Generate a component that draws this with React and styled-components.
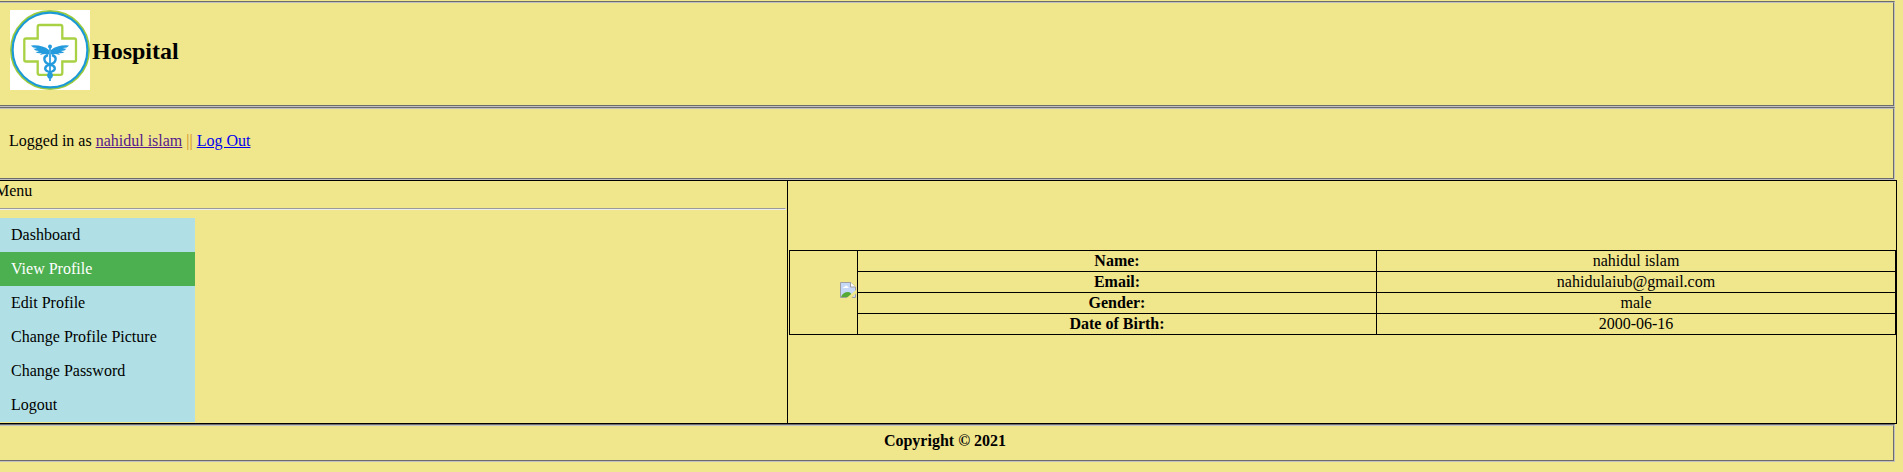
import React from "react";
import styled, { createGlobalStyle } from "styled-components";

const GlobalStyle = createGlobalStyle`
  html, body { margin: 0; padding: 0; background: #f0e68c; }
  body {
    height: 472px;
    overflow: hidden;
    color: #000;
    font: 16px/18px "Liberation Serif", "Times New Roman", serif;
  }
  *, *::before, *::after { box-sizing: border-box; }
`;

const Page = styled.div`
  width: 1900px;
  margin-left: -5px;
  padding-top: 1px;
`;

const Panel = styled.section`
  height: ${(p) => p.$height}px;
  border: 2px groove #c0c0c0;
`;

const Header = styled(Panel)`
  display: flex;
  align-items: flex-start;
  padding: 7px 13px;
`;

const Title = styled.h2`
  margin: 27px 0 0 2px;
  font-size: 24px;
  line-height: 28px;
  font-weight: bold;
`;

const Session = styled(Panel)`
  padding: 23px 12px;
`;

const Link = styled.a`
  color: ${(p) => (p.$visited ? "#551a8b" : "#0000ee")};
  text-decoration: underline;
`;

const Divider = styled.span`
  color: #d08a20;
`;

const Main = styled.main`
  display: grid;
  grid-template-columns: 794px 1fr;
  width: 1904px;
  height: 244px;
  margin-left: -2px;
  border: 1px solid #000;
`;

const Sidebar = styled.aside`
  padding: 1px;
  border-right: 1px solid #000;
`;

const Rule = styled.hr`
  margin: 8px 0;
  border: 1px solid;
  border-color: #9a9a9a #eee #eee #9a9a9a;
`;

const Menu = styled.ul`
  width: 200px;
  margin: 0;
  padding: 0;
  list-style: none;
  background: #b0e0e6;
`;

const MenuItem = styled.li`
  height: 34px;
  padding: 8px 16px;
  color: ${(p) => (p.$active ? "#fff" : "#000")};
  background: ${(p) => (p.$active ? "#4caf50" : "transparent")};
`;

const Content = styled.div`
  display: flex;
  align-items: center;
  padding: 0 0 19px 1px;
`;

const Profile = styled.div`
  display: grid;
  grid-template-columns: 68px 1fr;
  width: 100%;
  height: 85px;
  border: 1px solid #000;
`;

const Picture = styled.div`
  display: flex;
  align-items: center;
  justify-content: flex-end;
  padding: 0 1px 5px 0;
  border-right: 1px solid #000;
`;

const Rows = styled.div`
  display: grid;
  grid-template-rows: repeat(3, 21px) 20px;
`;

const Row = styled.div`
  display: grid;
  grid-template-columns: 519px 518px;
  border-bottom: 1px solid #000;
  text-align: center;
  line-height: 20px;
  &:last-child { border-bottom: 0; }
`;

const Label = styled.div`
  border-right: 1px solid #000;
  font-weight: bold;
`;

const Value = styled.div``;

const Footer = styled(Panel)`
  padding-top: 6px;
  text-align: center;
  font-weight: bold;
`;

const Logo = () => (
  <svg width="80" height="80" viewBox="0 0 80 80">
    <rect width="80" height="80" fill="#fff" />
    <circle cx="40" cy="40" r="39" fill="none" stroke="#9ccb3b" strokeWidth="2" />
    <circle cx="40" cy="40" r="37.400" fill="none" stroke="#1c9ad6" strokeWidth="2.200" />
    <path
      d="M29.500 15H50.500Q52.300 15 52.300 16.800V28.500H64.500Q66 28.500 66 30V50Q66 51.500 64.500 51.500H52.300V63Q52.300 64.800 50.500 64.800H29.500Q27.700 64.800 27.700 63V51.500H16Q14.300 51.500 14.300 50V30Q14.300 28.500 16 28.500H27.700V16.800Q27.700 15 29.500 15Z"
      fill="none" stroke="#a9d144" strokeWidth="2.300"
    />
    <path d="M21 35.500Q32 34.500 39 40V44.500Q35 43.500 30 45Q31 43.500 32 43Q28 44 25.500 42Q28 42 29 41Q25 41 23.500 38.800Q26 39 27 38Q22.500 38 21 35.500ZM59 35.500Q48 34.500 41 40V44.500Q45 43.500 50 45Q49 43.500 48 43Q52 44 54.500 42Q52 42 51 41Q55 41 56.500 38.800Q54 39 53 38Q57.500 38 59 35.500Z" fill="#249bdd" />
    <circle cx="40" cy="36.500" r="2" fill="#249bdd" />
    <path d="M40 38V71" stroke="#249bdd" strokeWidth="1.700" />
    <path d="M38 45C32 47 34 53 40 54.500S46 60 42 61.500S37 66 40 68M42 45C48 47 46 53 40 54.500S34 60 38 61.500S43 66 40 68" fill="none" stroke="#249bdd" strokeWidth="2.400" />
  </svg>
);

const MissingImage = () => (
  <svg width="16" height="16" viewBox="0 0 16 16">
    <path d="M.5 .5H11L15.500 5V15.500H.5Z" fill="#c5d8f7" stroke="#a0a0a0" />
    <path d="M3 6Q3 4.500 5 4.500Q6 2.500 7.500 4.500Q9 4.500 8.500 6Z" fill="#fff" />
    <path d="M1 15Q3 10 8 10Q11 10 13 15Z" fill="#54a937" />
    <path d="M10.500 .5V5H15.500" fill="#fff" stroke="#a0a0a0" />
    <path d="M6.500 16L16 8V11.500L11.500 16ZM11 0L16 5V0Z" fill="#f0e68c" />
  </svg>
);

const menu = ["Dashboard", "View Profile", "Edit Profile", "Change Profile Picture", "Change Password", "Logout"];

const details = [
  ["Name:", "nahidul islam"],
  ["Email:", "nahidulaiub@gmail.com"],
  ["Gender:", "male"],
  ["Date of Birth:", "2000-06-16"],
];

export default function App() {
  return (
    <>
      <GlobalStyle />
      <Page>
        <Header as="header" $height={106}>
          <Logo />
          <Title>Hospital</Title>
        </Header>
        <Session $height={73}>
          Logged in as <Link $visited>nahidul islam</Link> <Divider>||</Divider> <Link>Log Out</Link>
        </Session>
        <Main>
          <Sidebar>
            Menu
            <Rule />
            <Menu>
              {menu.map((item) => (
                <MenuItem key={item} $active={item === "View Profile"}>{item}</MenuItem>
              ))}
            </Menu>
          </Sidebar>
          <Content>
            <Profile>
              <Picture><MissingImage /></Picture>
              <Rows>
                {details.map(([label, value]) => (
                  <Row key={label}>
                    <Label>{label}</Label>
                    <Value>{value}</Value>
                  </Row>
                ))}
              </Rows>
            </Profile>
          </Content>
        </Main>
        <Footer as="footer" $height={38}>Copyright © 2021</Footer>
      </Page>
    </>
  );
}
